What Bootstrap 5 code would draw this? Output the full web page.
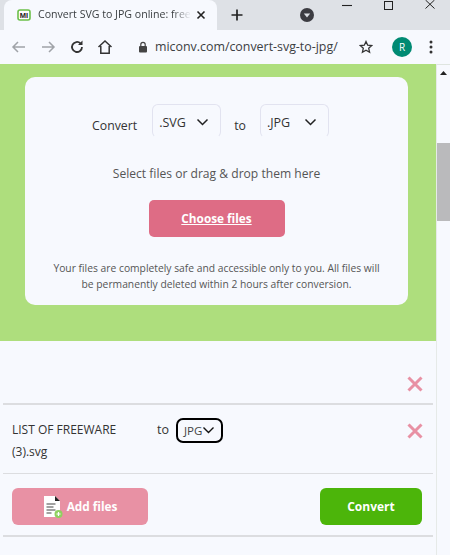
<!DOCTYPE html>
<html><head><meta charset="utf-8">
<link href="https://cdn.jsdelivr.net/npm/bootstrap@5.3.0/dist/css/bootstrap.min.css" rel="stylesheet">
<style>
html,body{margin:0;height:555px;overflow:hidden;background:#f7f9fe;font-family:"Open Sans","Noto Sans",sans-serif;color:#333}
.tabstrip{height:30px;background:#dee1e6;position:relative}
.tabitem{width:213px;height:30px;background:#f7f9fe;border-radius:8px 8px 0 0;margin-left:4px;padding-left:13px;padding-right:11px;font-size:10.6px;color:#3c4043}
.tabtitle{white-space:nowrap;margin-left:7px;-webkit-mask-image:linear-gradient(90deg,#000 88%,transparent 100%);mask-image:linear-gradient(90deg,#000 88%,transparent 100%)}
.plusicon{margin-left:13px;margin-top:8px}
.toolbar{height:34px;background:#f7f9fe;padding-left:11px;padding-right:17px}
.url{font-size:12.4px;color:#3c4043}
.avatar{width:20px;height:20px;border-radius:50%;background:#008a73;color:#fff;font-size:10px;margin-left:19px}
.winbtn{position:absolute;top:0}
.pagearea{height:491px;position:relative}
.mainpart{width:436px}
.scrolltrack{width:14px;height:491px;background:#f7f9fe;border-left:1px solid #e6eae8;border-top:1px solid #dfe5e0;position:relative}
.scrollthumb{position:absolute;top:78px;left:0;width:13px;height:78px;background:#bababc}
.greenband{height:277px;background:#aede7d;padding:13px 28px 0 25px}
.whitebox{height:228px;background:#f7f9fe;border-radius:10px;padding-top:27px;color:#444;text-align:center}
.pickrow{padding-left:67px;font-size:12.3px;color:#333;height:34px}
.pickword{padding-top:13px;line-height:18px}
.picker{width:69px;height:34px;border:1px solid #e2e3f0;border-bottom-color:#f7f9fe;border-radius:6px;font-size:12.5px;padding:9px 11px 0 6px;color:#333;line-height:18px}
.hint{font-size:12.1px;color:#555;margin-top:27px;line-height:17px}
.choosebtn{width:136px;height:37px;background:#de6c85;color:#fff;font-weight:700;font-size:11.8px;border-radius:5px;margin:18px auto 0;text-decoration:underline;border:0}
.legal{font-size:10.3px;line-height:16px;color:#555;margin-top:23px;padding:0 26px}
.filerow{margin-left:3px;margin-right:3px;border-bottom:2px solid #dcdde0}
.rowone{height:64px}
.rowtwo{height:69px;border-bottom-width:1px;padding-left:9px;padding-top:14px;font-size:12px;color:#333;position:relative}
.fname{width:123px;line-height:22px}
.tolabel{font-size:12.5px;margin-left:22px;line-height:22px}
.jpgsel{width:47px;height:25px;border:2px solid #000;border-radius:7px;margin-left:7px;margin-top:-1px;font-size:11.5px;padding-left:6px;color:#444}
.closex{position:absolute;right:10px}
.actions{height:63px;border-bottom:2px solid #dcdde0;margin-left:3px;margin-right:3px;padding:14px 11px 0 9px}
.addbtn{width:136px;height:37px;background:#e891a4;color:#fff;font-weight:700;font-size:11.8px;border-radius:6px;border:0}
.gobtn{width:102px;height:37px;background:#4cb50a;color:#fff;font-weight:700;font-size:12px;border-radius:6px;border:0}
</style></head>
<body>
<div class="tabstrip d-flex">
  <div class="tabitem d-flex align-items-center">
    <svg width="14" height="14" viewBox="0 0 14 14"><rect x="1" y="2" width="12" height="10" rx="2" fill="#fff" stroke="#6cc04a" stroke-width="1.6"/><text x="7" y="10" font-size="7.5" font-weight="700" text-anchor="middle" fill="#222" font-family="Liberation Sans">MI</text></svg>
    <div class="tabtitle">Convert SVG to JPG online: free</div>
    <svg class="ms-auto" width="10" height="10" viewBox="0 0 10 10"><path d="M1.500 1.500l7 7M8.500 1.500l-7 7" stroke="#222" stroke-width="1.600"/></svg>
  </div>
  <svg class="plusicon" width="14" height="14" viewBox="0 0 14 14"><path d="M7 1.500v11M1.500 7h11" stroke="#222" stroke-width="1.700"/></svg>
  <svg class="winbtn" style="left:300px;top:8px" width="14" height="14" viewBox="0 0 14 14"><circle cx="7" cy="7" r="7" fill="#3c3c42"/><path d="M3.800 5.500h6.400L7 9.500z" fill="#dee1e6"/></svg>
  <svg class="winbtn" style="left:342px;top:0" width="10" height="10" viewBox="0 0 10 10"><path d="M0 5.500h10" stroke="#222" stroke-width="1.100"/></svg>
  <svg class="winbtn" style="left:384px;top:0" width="10" height="10" viewBox="0 0 10 10"><rect x=".5" y="1.500" width="8" height="8" fill="none" stroke="#222"/></svg>
  <svg class="winbtn" style="left:425px;top:0" width="10" height="9" viewBox="0 0 10 9"><path d="M.5 0l9 8.500M9.500 0l-9 8.500" stroke="#222" stroke-width="1"/></svg>
</div>
<div class="toolbar d-flex align-items-center">
  <svg width="16" height="14" viewBox="0 0 16 14"><path d="M14 7H2M7 2L2 7l5 5" fill="none" stroke="#a0a3a8" stroke-width="1.500"/></svg>
  <svg style="margin-left:13px" width="16" height="14" viewBox="0 0 16 14"><path d="M2 7h12M9 2l5 5-5 5" fill="none" stroke="#a0a3a8" stroke-width="1.500"/></svg>
  <svg style="margin-left:13px" width="16" height="16" viewBox="0 0 16 16"><path d="M13 8a5 5 0 1 1-1.500-3.600" fill="none" stroke="#333" stroke-width="1.800"/><path d="M13.500 1.500v4.500h-4.500z" fill="#333"/></svg>
  <svg style="margin-left:12px" width="16" height="16" viewBox="0 0 16 16"><path d="M1.500 8L8 2l6.500 6M3.800 7v7.200h8.400V7" fill="none" stroke="#333" stroke-width="1.500"/></svg>
  <svg style="margin-left:25px" width="10" height="12" viewBox="0 0 10 12"><path d="M2.800 5V3.500a2.200 2.200 0 0 1 4.400 0V5" fill="none" stroke="#444" stroke-width="1.200"/><rect x="1" y="5" width="8" height="6.500" rx="1" fill="#444"/></svg>
  <div class="url" style="margin-left:7px">miconv.com/convert-svg-to-jpg/</div>
  <svg class="ms-auto" width="14" height="14" viewBox="0 0 14 14"><path d="M7 1.500l1.700 3.700 4 .4-3 2.700.9 4L7 10.300l-3.600 2 .9-4-3-2.700 4-.4z" fill="none" stroke="#333" stroke-width="1.300"/></svg>
  <div class="avatar d-flex align-items-center justify-content-center">R</div>
  <svg style="margin-left:17px" width="4" height="14" viewBox="0 0 4 14"><circle cx="2" cy="2" r="1.500" fill="#333"/><circle cx="2" cy="7" r="1.500" fill="#333"/><circle cx="2" cy="12" r="1.500" fill="#333"/></svg>
</div>
<div class="pagearea d-flex">
  <div class="mainpart">
    <div class="greenband">
      <div class="whitebox">
        <div class="pickrow d-flex align-items-start">
          <span class="pickword">Convert</span>
          <div class="picker d-flex justify-content-between" style="margin-left:15px"><span>.SVG</span><svg class="mt-1" width="13" height="9" viewBox="0 0 13 9"><path d="M1.500 1.500l5 5 5-5" fill="none" stroke="#222" stroke-width="1.500"/></svg></div>
          <span class="pickword" style="margin-left:13px">to</span>
          <div class="picker d-flex justify-content-between" style="margin-left:14px"><span>.JPG</span><svg class="mt-1" width="13" height="9" viewBox="0 0 13 9"><path d="M1.500 1.500l5 5 5-5" fill="none" stroke="#222" stroke-width="1.500"/></svg></div>
        </div>
        <div class="hint">Select files or drag &amp; drop them here</div>
        <button class="choosebtn d-block">Choose files</button>
        <div class="legal">Your files are completely safe and accessible only to you. All files will be permanently deleted within 2 hours after conversion.</div>
      </div>
    </div>
    <div class="filerow rowone position-relative">
      <svg class="closex" style="top:35px" width="16" height="16" viewBox="0 0 16 16"><path d="M1.500 1.500l13 13M14.500 1.500l-13 13" stroke="#e891a4" stroke-width="3"/></svg>
    </div>
    <div class="filerow rowtwo d-flex align-items-start">
      <div class="fname">LIST OF FREEWARE (3).svg</div>
      <span class="tolabel">to</span>
      <div class="jpgsel d-flex align-items-center">JPG<svg width="13" height="9" viewBox="0 0 13 9"><path d="M1.500 1.500l5 5 5-5" fill="none" stroke="#111" stroke-width="1.400"/></svg></div>
      <svg class="closex" style="top:18px" width="16" height="16" viewBox="0 0 16 16"><path d="M1.500 1.500l13 13M14.500 1.500l-13 13" stroke="#e891a4" stroke-width="3"/></svg>
    </div>
    <div class="actions d-flex justify-content-between">
      <button class="addbtn d-flex align-items-center justify-content-center">
        <svg class="me-1" width="20" height="24" viewBox="0 0 20 24"><path d="M1 1h11l5 5v16H1z" fill="#fff"/><path d="M12 1l5 5h-5z" fill="#222"/><path d="M3.500 9h9M3.500 12h7M3.500 15h9M3.500 18h5" stroke="#444" stroke-width="1.200"/><circle cx="15.500" cy="19" r="4" fill="#8fd05f"/><path d="M13.500 19h4M15.500 17v4" stroke="#fff" stroke-width="1.200"/></svg>
        <span>Add files</span>
      </button>
      <button class="gobtn">Convert</button>
    </div>
  </div>
  <div class="scrolltrack">
    <svg class="position-absolute" style="left:3px;top:6px" width="7" height="4" viewBox="0 0 7 4"><path d="M3.500 0l3.500 4H0z" fill="#222"/></svg>
    <div class="scrollthumb"></div>
  </div>
</div>
<script src="https://cdn.jsdelivr.net/npm/bootstrap@5.3.0/dist/js/bootstrap.bundle.min.js"></script>
</body></html>
